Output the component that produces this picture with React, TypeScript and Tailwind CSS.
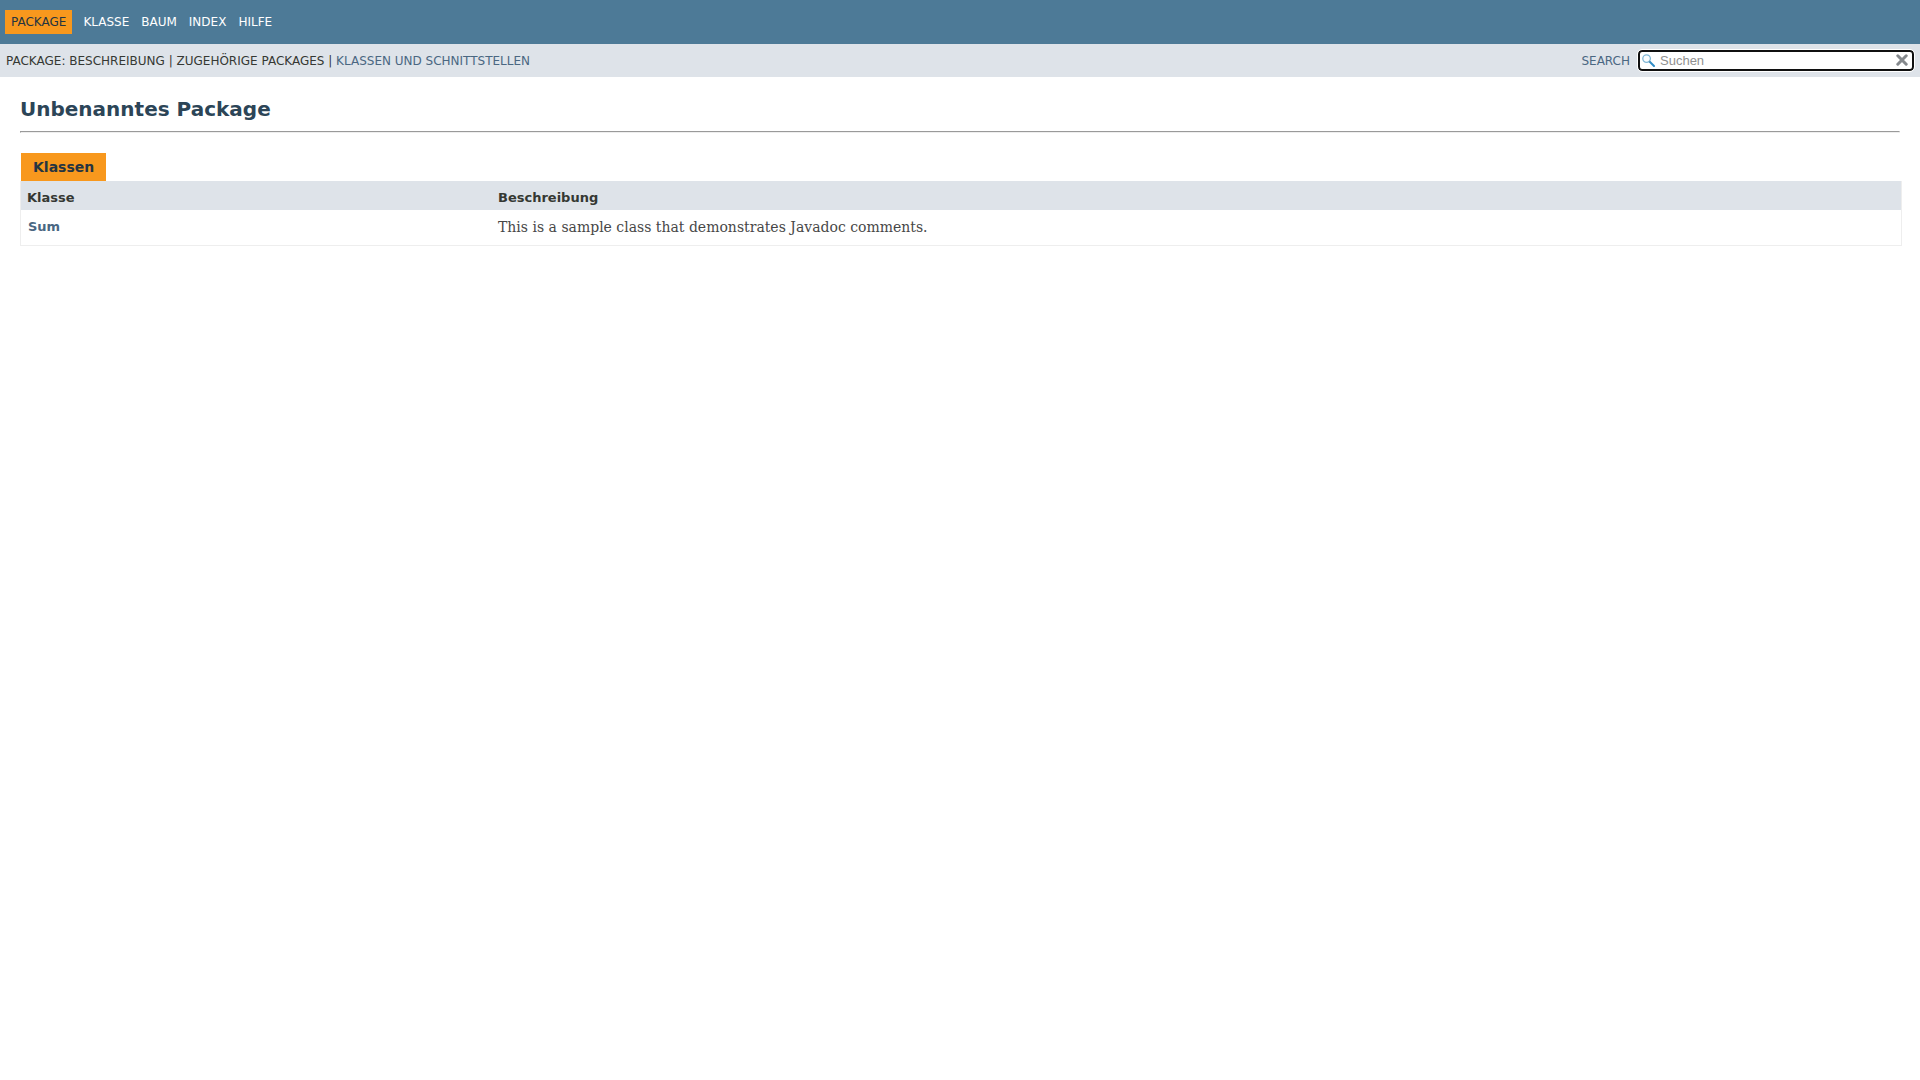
const NAV_LINKS = ['Klasse', 'Baum', 'Index', 'Hilfe'];

const CLASSES = [
  { name: 'Sum', description: 'This is a sample class that demonstrates Javadoc comments.' },
];

function SearchIcon() {
  return (
    <svg viewBox="0 0 13 13" className="size-[13px]" aria-hidden="true">
      <path d="M8 8l4 4" stroke="#2f8cc6" strokeWidth="2" strokeLinecap="round" />
      <circle cx="4.6" cy="4.6" r="3.8" fill="#fafdff" stroke="#80b7d6" strokeWidth="1.3" />
      <path d="M7.3 7.3l1 1" stroke="#5b8fae" strokeWidth="1.4" />
    </svg>
  );
}

function ResetIcon() {
  return (
    <svg viewBox="0 0 12 12" className="size-3" aria-hidden="true">
      <path d="M1.8 1.8l8.4 8.4M10.2 1.8l-8.4 8.4" stroke="#85898d" strokeWidth="3" strokeLinecap="round" />
    </svg>
  );
}

function TopNav() {
  return (
    <nav className="flex h-11 items-center bg-[#4d7a97] pl-[5px] text-[12px] uppercase text-white">
      <span className="bg-[#f8981d] px-1.5 py-[5px] leading-[14px] text-[#253441]">Package</span>
      <ul className="ml-[11px] flex gap-3">
        {NAV_LINKS.map(link => (
          <li key={link}><a href="#">{link}</a></li>
        ))}
      </ul>
    </nav>
  );
}

function SubNav() {
  return (
    <div className="flex h-[33px] items-center justify-between bg-[#dee3e9] pl-1.5 pr-1.5 text-[12px] uppercase">
      <div>
        Package: Beschreibung | Zugehörige Packages |{' '}
        <a href="#classes" className="text-[#4a6782]">Klassen und Schnittstellen</a>
      </div>
      <form className="flex items-center gap-2">
        <label htmlFor="search" className="text-[#4a6782]">Search</label>
        <div className="relative">
          <input
            id="search"
            type="text"
            placeholder="Suchen"
            className="block h-[21px] w-[276px] rounded-[4px] border-2 border-[#101010] bg-white pl-5 pr-6 font-['Liberation_Sans',Arial,sans-serif] text-[13px] outline-1 outline-white placeholder:text-[#909090]"
          />
          <span className="pointer-events-none absolute left-1 top-1"><SearchIcon /></span>
          <button type="reset" aria-label="Reset" className="absolute right-1.5 top-1"><ResetIcon /></button>
        </div>
      </form>
    </div>
  );
}

export default function App() {
  return (
    <div className="bg-white font-['DejaVu_Sans',Arial,sans-serif] text-[14px] text-[#353833]">
      <header>
        <TopNav />
        <SubNav />
      </header>
      <main className="px-5 pt-5">
        <h1 className="text-[20px] font-bold leading-6 text-[#2c4557]">Unbenanntes Package</h1>
        <hr className="mt-2.5 h-0.5 border border-[#eeeeee] border-t-[#9a9a9a] border-l-[#9a9a9a]" />
        <section id="classes" className="-mr-0.5 mt-5">
          <h2 className="ml-px w-fit bg-[#f8981d] px-3 py-1.5 text-[14px] font-bold leading-4 text-[#253441]">Klassen</h2>
          <table className="w-full table-fixed border-separate border-spacing-0 border border-t-0 border-[#eeeeee] text-left">
            <thead>
              <tr className="bg-[#dee3e9] text-[13px] leading-4">
                <th className="h-[29px] w-1/4 px-1.5 pb-1 pt-[9px]">Klasse</th>
                <th className="px-[7px] pb-1 pt-[9px]">Beschreibung</th>
              </tr>
            </thead>
            <tbody>
              {CLASSES.map(item => (
                <tr key={item.name} className="align-top">
                  <th className="h-[35px] px-[7px] pt-[9px] text-[13px] leading-4">
                    <a href="#" className="text-[#4a6782]">{item.name}</a>
                  </th>
                  <td className="px-[7px] pt-[9px] font-['DejaVu_Serif',Georgia,serif] leading-4 text-[#474747]">{item.description}</td>
                </tr>
              ))}
            </tbody>
          </table>
        </section>
      </main>
    </div>
  );
}
